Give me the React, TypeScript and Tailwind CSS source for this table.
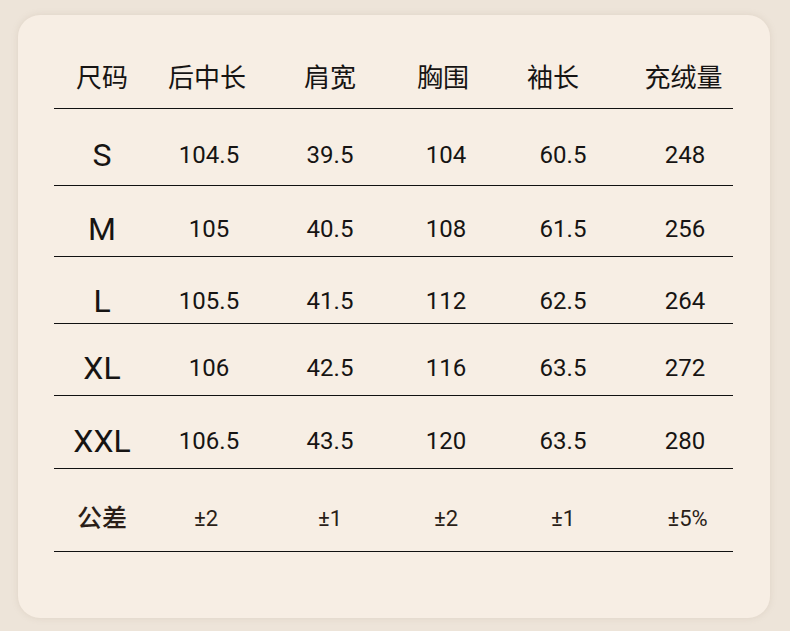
const cols = "grid grid-cols-[96px_118px_124px_108px_126px_107px]";

const header = ["尺码", "后中长", "肩宽", "胸围", "袖长", "充绒量"];
const headerPad = ["", "pr-[4px]", "", "pr-[6px]", "pr-[20px]", "pl-[8px]"];

const rows: { size: string; vals: string[]; h: string; pt: string }[] = [
  { size: "S", vals: ["104.5", "39.5", "104", "60.5", "248"], h: "h-[77px]", pt: "pt-[31px]" },
  { size: "M", vals: ["105", "40.5", "108", "61.5", "256"], h: "h-[71px]", pt: "pt-[28px]" },
  { size: "L", vals: ["105.5", "41.5", "112", "62.5", "264"], h: "h-[67px]", pt: "pt-[29px]" },
  { size: "XL", vals: ["106", "42.5", "116", "63.5", "272"], h: "h-[72px]", pt: "pt-[29px]" },
  { size: "XXL", vals: ["106.5", "43.5", "120", "63.5", "280"], h: "h-[73px]", pt: "pt-[30px]" },
];

const tol = ["±2", "±1", "±2", "±1", "±5%"];

export default function App() {
  return (
    <div className="w-[790px] h-[631px] bg-[#ede4d9] pt-[15px] pl-[18px] font-['Roboto','Noto_Sans_CJK_SC',sans-serif] text-[#161413]">
      <div className="w-[752px] h-[603px] rounded-[22px] bg-[#f7eee4] shadow-[0_0_6px_rgba(180,160,140,0.25)] pl-[36px]">
        <div className="w-[679px]">
          <div className={`${cols} h-[94px] pt-[48px] border-b-[1.5px] border-[#111] text-[26px] leading-[30px] text-center`}>
            {header.map((h, i) => (
              <div key={h} className={headerPad[i]}>
                {h}
              </div>
            ))}
          </div>
          {rows.map((r) => (
            <div key={r.size} className={`${cols} ${r.h} ${r.pt} border-b-[1.5px] border-[#111] leading-[30px] text-center`}>
              <div className="text-[32px]">{r.size}</div>
              {r.vals.map((v, i) => (
                <div key={i} className={`text-[24px] ${i === 4 ? "pl-[11px]" : ""}`}>
                  {v}
                </div>
              ))}
            </div>
          ))}
          <div className={`${cols} h-[83px] pt-[35px] border-b-[1.5px] border-[#111] leading-[30px] text-center text-[#2a1e18]`}>
            <div className="text-[25px] font-medium">公差</div>
            {tol.map((v, i) => (
              <div key={i} className={`text-[22px] ${i === 4 ? "pl-[16px]" : i === 0 ? "pr-[6px]" : ""}`}>
                {v}
              </div>
            ))}
          </div>
        </div>
      </div>
    </div>
  );
}
